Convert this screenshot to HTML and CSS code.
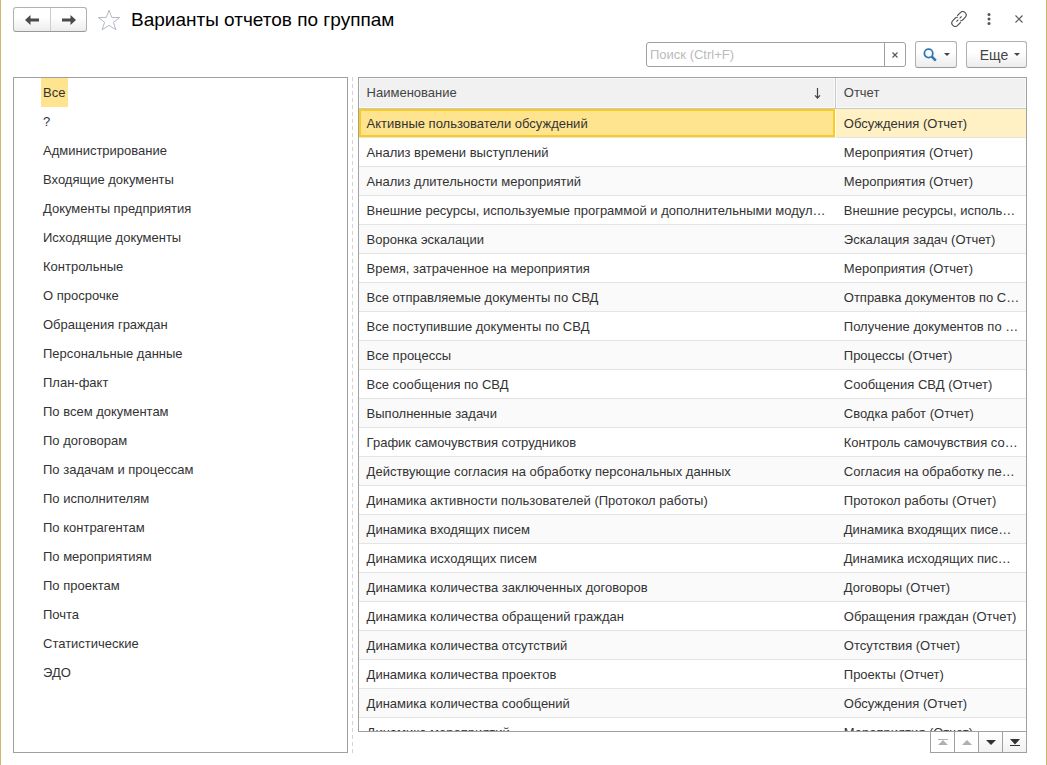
FILE: index.html
```html
<!DOCTYPE html>
<html lang="ru">
<head>
<meta charset="utf-8">
<title>Варианты отчетов по группам</title>
<link rel="stylesheet" href="styles.css">
</head>
<body>
<div class="window">
  <header class="titlebar">
    <div class="history">
      <button type="button" class="history-button" aria-label="Назад"><svg width="14" height="10" viewBox="0 0 14 10"><path d="M0 5 5.5 0V3.5H14V6.5H5.5V10Z" fill="#4a4a4a"/></svg></button>
      <button type="button" class="history-button" aria-label="Вперед"><svg width="14" height="10" viewBox="0 0 14 10"><path d="M14 5 8.5 0V3.5H0V6.5H8.5V10Z" fill="#4a4a4a"/></svg></button>
    </div>
    <button type="button" class="plain-button" aria-label="В избранное"><svg width="24" height="22" viewBox="0 0 24 22"><path d="M12 1.2 14.7 8.4 22.6 8.6 16.4 13.3 18.9 20.8 12 16.4 5.1 20.8 7.6 13.3 1.4 8.6 9.3 8.4Z" fill="#fff" stroke="#b3bac2" stroke-width="1"/></svg></button>
    <h1 class="title">Варианты отчетов по группам</h1>
    <div class="window-tools">
      <button type="button" class="plain-button" aria-label="Получить ссылку"><svg width="16" height="16" viewBox="0 0 16 16" fill="none" stroke="#555" stroke-width="1.2"><path d="M6.2 4.8 9.4 1.7A3.1 3.1 0 0 1 14.2 6.3L11.4 9.2 9.2 10"/><path d="M9.8 11.2 6.6 14.3A3.1 3.1 0 0 1 1.8 9.7L4.6 6.8 6.8 6"/><path d="M5.4 10.6 7.4 8.6M8.6 7.4 10.6 5.4"/></svg></button>
      <button type="button" class="plain-button" aria-label="Меню"><svg width="4" height="12" viewBox="0 0 4 12" fill="#555"><circle cx="2" cy="1.6" r="1.5"/><circle cx="2" cy="6" r="1.5"/><circle cx="2" cy="10.4" r="1.5"/></svg></button>
      <button type="button" class="plain-button" aria-label="Закрыть"><svg width="8" height="8" viewBox="0 0 8 8"><path d="M.5.5 7.5 7.5M7.5.5.5 7.5" stroke="#555" stroke-width="1.1"/></svg></button>
    </div>
  </header>

  <div class="toolbar">
    <div class="search">
      <input type="text" class="search-input" placeholder="Поиск (Ctrl+F)" aria-label="Поиск">
      <button type="button" class="search-clear" aria-label="Очистить"><svg width="6" height="6" viewBox="0 0 6 6"><path d="M.5.5 5.5 5.5M5.5.5.5 5.5" stroke="#555" stroke-width="1.1"/></svg></button>
    </div>
    <button type="button" class="button find-button" aria-label="Найти"><svg width="14" height="14" viewBox="0 0 14 14" fill="none" stroke="#2f79b0"><circle cx="5.6" cy="5.4" r="4.2" stroke-width="1.8"/><path d="M8.6 8.4 12.8 12.6" stroke-width="2.6"/></svg><svg width="6" height="3" viewBox="0 0 6 3"><path d="M0 0H6L3 3Z" fill="#444"/></svg></button>
    <button type="button" class="button more-button">Еще<svg width="6" height="3" viewBox="0 0 6 3"><path d="M0 0H6L3 3Z" fill="#444"/></svg></button>
  </div>

  <main class="content">
    <nav class="groups" aria-label="Группы">
      <ul class="group-list">
        <li><a class="group selected" href="#">Все</a></li>
        <li><a class="group" href="#">?</a></li>
        <li><a class="group" href="#">Администрирование</a></li>
        <li><a class="group" href="#">Входящие документы</a></li>
        <li><a class="group" href="#">Документы предприятия</a></li>
        <li><a class="group" href="#">Исходящие документы</a></li>
        <li><a class="group" href="#">Контрольные</a></li>
        <li><a class="group" href="#">О просрочке</a></li>
        <li><a class="group" href="#">Обращения граждан</a></li>
        <li><a class="group" href="#">Персональные данные</a></li>
        <li><a class="group" href="#">План-факт</a></li>
        <li><a class="group" href="#">По всем документам</a></li>
        <li><a class="group" href="#">По договорам</a></li>
        <li><a class="group" href="#">По задачам и процессам</a></li>
        <li><a class="group" href="#">По исполнителям</a></li>
        <li><a class="group" href="#">По контрагентам</a></li>
        <li><a class="group" href="#">По мероприятиям</a></li>
        <li><a class="group" href="#">По проектам</a></li>
        <li><a class="group" href="#">Почта</a></li>
        <li><a class="group" href="#">Статистические</a></li>
        <li><a class="group" href="#">ЭДО</a></li>
      </ul>
    </nav>
    <div class="splitter"></div>
    <section class="reports">
      <div class="table-frame">
        <table class="table">
          <thead>
            <tr>
              <th class="name-column"><div class="heading">Наименование<svg width="7" height="11" viewBox="0 0 7 11"><path d="M3.5 0V9.5M1 7.3 3.5 10 6 7.3" fill="none" stroke="#444" stroke-width="1.2"/></svg></div></th>
              <th><div class="heading">Отчет</div></th>
            </tr>
          </thead>
          <tbody>
            <tr class="current"><td>Активные пользователи обсуждений</td><td>Обсуждения (Отчет)</td></tr>
            <tr><td>Анализ времени выступлений</td><td>Мероприятия (Отчет)</td></tr>
            <tr><td>Анализ длительности мероприятий</td><td>Мероприятия (Отчет)</td></tr>
            <tr><td>Внешние ресурсы, используемые программой и дополнительными модул…</td><td>Внешние ресурсы, исполь…</td></tr>
            <tr><td>Воронка эскалации</td><td>Эскалация задач (Отчет)</td></tr>
            <tr><td>Время, затраченное на мероприятия</td><td>Мероприятия (Отчет)</td></tr>
            <tr><td>Все отправляемые документы по СВД</td><td>Отправка документов по С…</td></tr>
            <tr><td>Все поступившие документы по СВД</td><td>Получение документов по …</td></tr>
            <tr><td>Все процессы</td><td>Процессы (Отчет)</td></tr>
            <tr><td>Все сообщения по СВД</td><td>Сообщения СВД (Отчет)</td></tr>
            <tr><td>Выполненные задачи</td><td>Сводка работ (Отчет)</td></tr>
            <tr><td>График самочувствия сотрудников</td><td>Контроль самочувствия со…</td></tr>
            <tr><td>Действующие согласия на обработку персональных данных</td><td>Согласия на обработку пе…</td></tr>
            <tr><td>Динамика активности пользователей (Протокол работы)</td><td>Протокол работы (Отчет)</td></tr>
            <tr><td>Динамика входящих писем</td><td>Динамика входящих писе…</td></tr>
            <tr><td>Динамика исходящих писем</td><td>Динамика исходящих пис…</td></tr>
            <tr><td>Динамика количества заключенных договоров</td><td>Договоры (Отчет)</td></tr>
            <tr><td>Динамика количества обращений граждан</td><td>Обращения граждан (Отчет)</td></tr>
            <tr><td>Динамика количества отсутствий</td><td>Отсутствия (Отчет)</td></tr>
            <tr><td>Динамика количества проектов</td><td>Проекты (Отчет)</td></tr>
            <tr><td>Динамика количества сообщений</td><td>Обсуждения (Отчет)</td></tr>
            <tr><td>Динамика мероприятий</td><td>Мероприятия (Отчет)</td></tr>
          </tbody>
        </table>
      </div>
      <div class="pager">
        <button type="button" class="pager-button" disabled aria-label="В начало"><svg width="10" height="7" viewBox="0 0 10 7"><path d="M0 0H10V1H0ZM5 1 10 6H0Z" fill="currentColor"/></svg></button>
        <button type="button" class="pager-button" disabled aria-label="Вверх"><svg width="10" height="5" viewBox="0 0 10 5"><path d="M5 0 10 5H0Z" fill="currentColor"/></svg></button>
        <button type="button" class="pager-button" aria-label="Вниз"><svg width="10" height="5" viewBox="0 0 10 5"><path d="M0 0H10L5 5Z" fill="currentColor"/></svg></button>
        <button type="button" class="pager-button" aria-label="В конец"><svg width="10" height="7" viewBox="0 0 10 7"><path d="M0 0H10L5 5.5ZM0 6H10V7H0Z" fill="currentColor"/></svg></button>
      </div>
    </section>
  </main>
</div>
</body>
</html>
```

FILE: styles.css
```css
* {
  box-sizing: border-box;
}

body {
  margin: 0;
  background: #fff;
  color: #333;
  font: 13px/16px "Liberation Sans", Arial, sans-serif;
}

button {
  display: flex;
  align-items: center;
  justify-content: center;
  margin: 0;
  padding: 0;
  color: #444;
  font: inherit;
}

svg {
  display: block;
  flex: none;
}

.window {
  display: flex;
  flex-direction: column;
  height: 100vh;
  padding: 7px 19px 12px 12px;
  border: solid #cdb96a;
  border-width: 0 1px;
}

.titlebar {
  display: flex;
  align-items: center;
  height: 25px;
}

.history {
  display: flex;
  margin-right: 10px;
  border: 1px solid #b0b0b0;
  border-bottom-color: #999;
  border-radius: 3px;
  background: linear-gradient(#fff 40%, #ececec);
}

.history-button {
  width: 36px;
  height: 23px;
  border: 0;
  background: none;
}

.history-button + .history-button {
  border-left: 1px solid #ccc;
}

.plain-button {
  border: 0;
  background: none;
}

.title {
  margin: 0 0 0 10px;
  color: #000;
  font-size: 19px;
  font-weight: 400;
  line-height: 24px;
}

.window-tools {
  display: flex;
  align-items: center;
  gap: 14px;
  margin-left: auto;
  padding-bottom: 2px;
}

.window-tools .plain-button {
  width: 16px;
  height: 16px;
}

.toolbar {
  display: flex;
  justify-content: flex-end;
  gap: 9px;
  margin: 9px 0;
}

.search {
  display: flex;
  width: 260px;
  height: 25px;
  margin-top: 1px;
  border: 1px solid #a0a0a0;
  border-radius: 3px;
}

.search-input {
  flex: 1;
  min-width: 0;
  padding: 0 3px;
  border: 0;
  background: none;
  font: inherit;
  outline: 0;
}

.search-input::placeholder {
  color: #bbb;
}

.search-clear {
  width: 21px;
  border: 0;
  border-left: 1px solid #a0a0a0;
  background: none;
}

.button {
  height: 27px;
  border: 1px solid #b0b0b0;
  border-bottom-color: #999;
  border-radius: 3px;
  background: linear-gradient(#fff 40%, #ececec);
}

.find-button {
  gap: 7px;
  width: 42px;
}

.more-button {
  gap: 6px;
  width: 61px;
  padding-left: 7px;
  font-size: 14px;
}

.content {
  display: flex;
  flex: 1;
  min-height: 0;
}

.groups {
  flex: 0 0 33%;
  border: 1px solid #a0a0a0;
}

.group-list {
  margin: 0;
  padding: 0 0 0 27px;
  list-style: none;
}

.group-list li {
  display: flex;
  height: 29px;
}

.group {
  padding: 7px 3px 6px 2px;
  color: inherit;
  text-decoration: none;
}

.selected {
  background: #ffe48f;
}

.splitter {
  width: 1px;
  margin: 0 5px 0 4px;
  background: repeating-linear-gradient(#d4d4d4 0 4px, #fff 4px 7px);
}

.reports {
  display: flex;
  flex: 1;
  flex-direction: column;
  min-width: 0;
}

.table-frame {
  flex: 1;
  min-height: 0;
  overflow: hidden;
  border: 1px solid #a0a0a0;
}

.table {
  width: 100%;
  border-spacing: 0;
  table-layout: fixed;
}

.table th {
  height: 31px;
  padding: 1px;
  border-bottom: 1px solid #c8c8c8;
  font-weight: 400;
  text-align: left;
}

.table .name-column {
  width: 71.5%;
  border-right: 1px solid #c8c8c8;
}

.heading {
  display: flex;
  align-items: center;
  justify-content: space-between;
  height: 28px;
  padding: 0 13px 0 7px;
  background: #f1f1f1;
  color: #444;
}

.table td {
  height: 29px;
  padding: 1px 4px 0 8px;
  overflow: hidden;
  border-bottom: 1px solid #e4e4e4;
  text-overflow: ellipsis;
  white-space: nowrap;
}

.table tr:nth-child(odd) {
  background: #fafafa;
}

.table .current td {
  background: #fff1c4;
}

.table .current td:first-child {
  border-right: 1px solid #fff;
  background: #ffe48f;
  box-shadow: inset 0 0 0 2px #facc22;
}

.pager {
  display: flex;
  align-self: flex-end;
  margin-top: -1px;
  border: solid #a0a0a0;
  border-width: 1px 1px 1px 0;
}

.pager-button {
  width: 24px;
  height: 20px;
  border: 0;
  border-left: 1px solid #a0a0a0;
  background: linear-gradient(#fff, #f2f2f2);
  color: #333;
}

.pager-button:disabled {
  background: #fff;
  color: #b0b0b0;
}
```
